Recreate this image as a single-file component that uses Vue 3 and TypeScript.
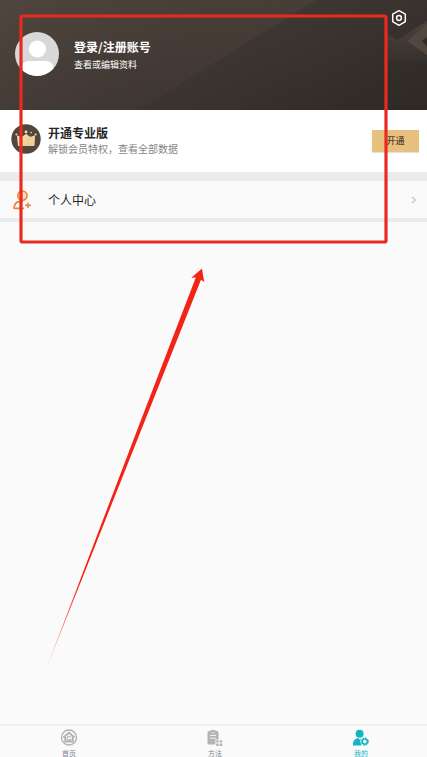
<script setup lang="ts">
import { ref } from 'vue'

type TabKey = 'home' | 'method' | 'mine'

const tabs: { key: TabKey; label: string }[] = [
  { key: 'home', label: '首页' },
  { key: 'method', label: '方法' },
  { key: 'mine', label: '我的' },
]
const active = ref<TabKey>('mine')
</script>

<template>
  <div class="page">
    <header class="hero">
      <svg class="hero-art" viewBox="0 0 427 110" preserveAspectRatio="none" aria-hidden="true">
        <defs>
          <linearGradient id="band" gradientUnits="userSpaceOnUse" x1="120" y1="0" x2="316" y2="0">
            <stop offset="0" stop-color="#54493f" stop-opacity=".1" />
            <stop offset="1" stop-color="#54493f" stop-opacity=".4" />
          </linearGradient>
          <linearGradient id="fade" x1="0" y1="0" x2="0" y2="1">
            <stop offset="0" stop-color="#4a423c" />
            <stop offset="1" stop-color="#37312d" />
          </linearGradient>
        </defs>
        <path d="M98 0H316L138 110H0V58Z" fill="url(#band)" />
        <path d="M387 34L397 40L427 21V61H387Z" fill="url(#fade)" />
        <path d="M427 24L407 41L427 55V47L422 41L427 37Z" fill="#51473f" />
        <path d="M427 37L422 41L427 46Z" fill="#332d29" />
      </svg>
      <button class="settings" type="button" aria-label="设置">
        <svg viewBox="0 0 16 18" width="16" height="18" fill="none" stroke="#fff" stroke-width="1.5">
          <path d="M8 1.6L14.3 5.1V12.7L8 16.3L1.7 12.7V5.1Z" stroke-linejoin="round" />
          <circle cx="8" cy="9" r="2.4" />
        </svg>
      </button>
      <a class="account" href="#login">
        <svg class="avatar" viewBox="0 0 44 44" aria-hidden="true">
          <defs>
            <clipPath id="face"><circle cx="22" cy="22" r="22" /></clipPath>
          </defs>
          <g clip-path="url(#face)">
            <rect width="44" height="44" fill="#d8d8d8" />
            <circle cx="22.4" cy="17" r="8.6" fill="#fff" />
            <rect x="6.5" y="29" width="32" height="22" rx="7" fill="#fff" />
          </g>
        </svg>
        <span class="account-text">
          <strong class="title">登录/注册账号</strong>
          <span class="hint">查看或编辑资料</span>
        </span>
      </a>
    </header>

    <section class="pro">
      <svg class="badge" viewBox="0 0 30 30" aria-hidden="true">
        <defs>
          <linearGradient id="gold" x1="0" y1="0" x2="1" y2="1">
            <stop offset="0" stop-color="#fbe5b3" />
            <stop offset="1" stop-color="#e9c88b" />
          </linearGradient>
        </defs>
        <circle cx="15" cy="15" r="14.7" fill="#51473f" />
        <path d="M6 11.5L10.5 13L12.2 12L15 10L17.8 12L19.5 13L24 11.5L23.2 22H7Z" fill="url(#gold)" />
        <path d="M15 10L17.8 12L19.5 13L24 11.5L23.2 22L15 17Z" fill="#efd198" />
        <g fill="#f6dca5">
          <circle cx="15" cy="8" r="1.4" />
          <circle cx="5.4" cy="10.4" r="1" />
          <circle cx="24.6" cy="10.4" r="1" />
          <circle cx="9.8" cy="8.6" r=".8" />
          <circle cx="20.2" cy="8.6" r=".8" />
        </g>
      </svg>
      <div class="pro-text">
        <strong class="title">开通专业版</strong>
        <span class="desc">解锁会员特权，查看全部数据</span>
      </div>
      <button class="open" type="button">开通</button>
    </section>

    <a class="row" href="#center">
      <svg class="row-icon" viewBox="0 0 20 20" fill="none" stroke="#f0803c" stroke-width="1.6" stroke-linecap="round" aria-hidden="true">
        <circle cx="10.4" cy="5.6" r="4.6" fill="#fbdcc4" />
        <path d="M10 11.6H7.6C4.2 11.8 2.2 14.6 2 18.4H11.5" stroke-linejoin="round" />
        <path d="M13.8 15.4H18.2M16 13.2V17.6" />
      </svg>
      <span class="row-label">个人中心</span>
      <svg class="chevron" viewBox="0 0 6 8" fill="none" stroke="#c4c4c4" stroke-width="1.2" aria-hidden="true">
        <path d="M1 1L4.4 4L1 7" />
      </svg>
    </a>

    <main class="content"></main>

    <nav class="tabs">
      <button
        v-for="tab in tabs"
        :key="tab.key"
        type="button"
        class="tab"
        :class="{ active: active === tab.key }"
        @click="active = tab.key"
      >
        <svg v-if="tab.key === 'home'" class="tab-icon" viewBox="0 0 18 18" fill="none" stroke="currentColor" aria-hidden="true">
          <circle cx="9" cy="9.5" r="7.5" stroke-width="1.4" />
          <path d="M3.4 9.5L9 4.7L14.6 9.5" stroke-width="1.9" />
          <path d="M5.2 8.9V13.5H12.8V8.9" stroke-width="1.8" />
          <path d="M10.8 9.5A2 2 0 1 0 10.8 11.5H9" stroke-width="1.2" />
        </svg>
        <svg v-else-if="tab.key === 'method'" class="tab-icon" viewBox="0 0 18 18" fill="currentColor" aria-hidden="true">
          <path d="M3 3H4.5V2H9.5V3H11Q12.5 3 12.5 4.5V11.4H9.4V16.5H3Q1.5 16.5 1.5 15V4.5Q1.5 3 3 3Z" />
          <path d="M4 7.4H10M4 10.2H10" stroke="#fafafa" stroke-width=".9" />
          <path d="M4.8 4.4H9.2" stroke="#fafafa" stroke-width=".5" />
          <path d="M10.2 12.2H12.7V14.6H10.2ZM13.7 12.2H16.2V14.6H13.7ZM10.2 15.5H12.7V17.9H10.2ZM13.7 15.5H16.2V17.9H13.7Z" />
        </svg>
        <svg v-else class="tab-icon" viewBox="0 0 18 18" fill="currentColor" aria-hidden="true">
          <circle cx="7.6" cy="5.8" r="4" />
          <path d="M6 10L7.6 11.6L9 10.3C7.8 12.6 8 15 9.8 17.4H1V15.4Q1.2 11.4 6 10Z" />
          <circle cx="12.8" cy="13.6" r="2.6" fill="none" stroke="currentColor" stroke-width="1.6" />
          <circle cx="12.8" cy="13.6" r="3.7" fill="none" stroke="currentColor" stroke-width="1" stroke-dasharray="1.6 1.3" />
        </svg>
        <span class="tab-label">{{ tab.label }}</span>
      </button>
    </nav>

    <svg class="markup" viewBox="0 0 427 757" preserveAspectRatio="xMinYMin meet" aria-hidden="true">
      <defs>
        <linearGradient id="tail" gradientUnits="userSpaceOnUse" x1="45" y1="672" x2="82" y2="580">
          <stop offset="0" stop-color="#f32316" stop-opacity=".25" />
          <stop offset="1" stop-color="#f32316" />
        </linearGradient>
      </defs>
      <rect x="21" y="16" width="365" height="226" rx="1.5" fill="none" stroke="#e92a20" stroke-width="3.2" />
      <path d="M202 268.5L204.2 282L201 279.8L142 428L45 672L138.5 426.5L195.8 277.5L191.3 277.8Z" fill="url(#tail)" />
    </svg>
  </div>
</template>

<style>
body {
  background: #fafafa;
}
</style>

<style scoped>
.page {
  position: relative;
  display: flex;
  flex-direction: column;
  min-height: 100vh;
  overflow: hidden;
  background: #fafafa;
  color: #262626;
  font-family: "Noto Sans CJK SC", "Noto Sans", sans-serif;
}

button {
  margin: 0;
  padding: 0;
  border: 0;
  background: none;
  font-family: inherit;
}

a {
  color: inherit;
  text-decoration: none;
}

.hero {
  position: relative;
  display: flex;
  flex-direction: column;
  box-sizing: border-box;
  height: 110px;
  padding: 9px 20px 0 15px;
  background: linear-gradient(155deg, #50463f 0%, #3d3531 52%, #2e2925 100%);
  color: #fff;
}

.hero-art {
  position: absolute;
  inset: 0;
  width: 100%;
  height: 100%;
}

.settings {
  position: relative;
  align-self: flex-end;
  height: 18px;
}

.settings svg {
  display: block;
}

.account {
  position: relative;
  display: flex;
  gap: 15px;
  margin-top: 5px;
}

.avatar {
  width: 44px;
  height: 44px;
}

.account-text {
  display: flex;
  flex-direction: column;
  gap: 4px;
  padding-top: 7px;
}

.title {
  font-size: 12px;
  line-height: 16px;
  font-weight: 700;
}

.hint {
  font-size: 9px;
  line-height: 12px;
}

.pro {
  display: flex;
  align-items: center;
  gap: 7px;
  box-sizing: border-box;
  height: 62px;
  padding: 0 8px 0 11px;
  background: #fff;
}

.badge {
  width: 30px;
  height: 30px;
  margin-bottom: 4px;
}

.pro-text {
  display: flex;
  flex: 1;
  flex-direction: column;
  margin-bottom: 2px;
}

.desc {
  color: #858585;
  font-size: 10px;
  line-height: 15px;
}

.open {
  width: 47px;
  height: 22px;
  background: #e8c080;
  box-shadow: 0 1px 1px #e6e2dc;
  color: #51422c;
  font-size: 9px;
  line-height: 22px;
  font-weight: 500;
}

.row {
  display: flex;
  align-items: center;
  height: 37px;
  padding: 0 10px 0 12px;
  border-top: 9px solid #ebebeb;
  border-bottom: 4px solid #ebebeb;
}

.row-icon {
  width: 20px;
  height: 20px;
  margin-right: 16px;
}

.row-label {
  flex: 1;
  font-size: 12px;
  line-height: 18px;
}

.chevron {
  width: 6px;
  height: 8px;
}

.content {
  flex: 1;
}

.tabs {
  display: flex;
  height: 31px;
  margin: 0 -7px 0 -4px;
  border-top: 2px solid #f1f1f1;
}

.tab {
  display: flex;
  flex: 1;
  flex-direction: column;
  align-items: center;
  gap: 3px;
  padding-top: 2px;
  color: #b3b3b3;
}

.tab-icon {
  flex: none;
  width: 18px;
  height: 18px;
}

.tab-label {
  color: #7d8690;
  font-size: 7px;
  line-height: 8px;
}

.active,
.active .tab-label {
  color: #14b5c3;
}

.markup {
  position: absolute;
  top: 0;
  left: 0;
  width: 100%;
  pointer-events: none;
}
</style>
